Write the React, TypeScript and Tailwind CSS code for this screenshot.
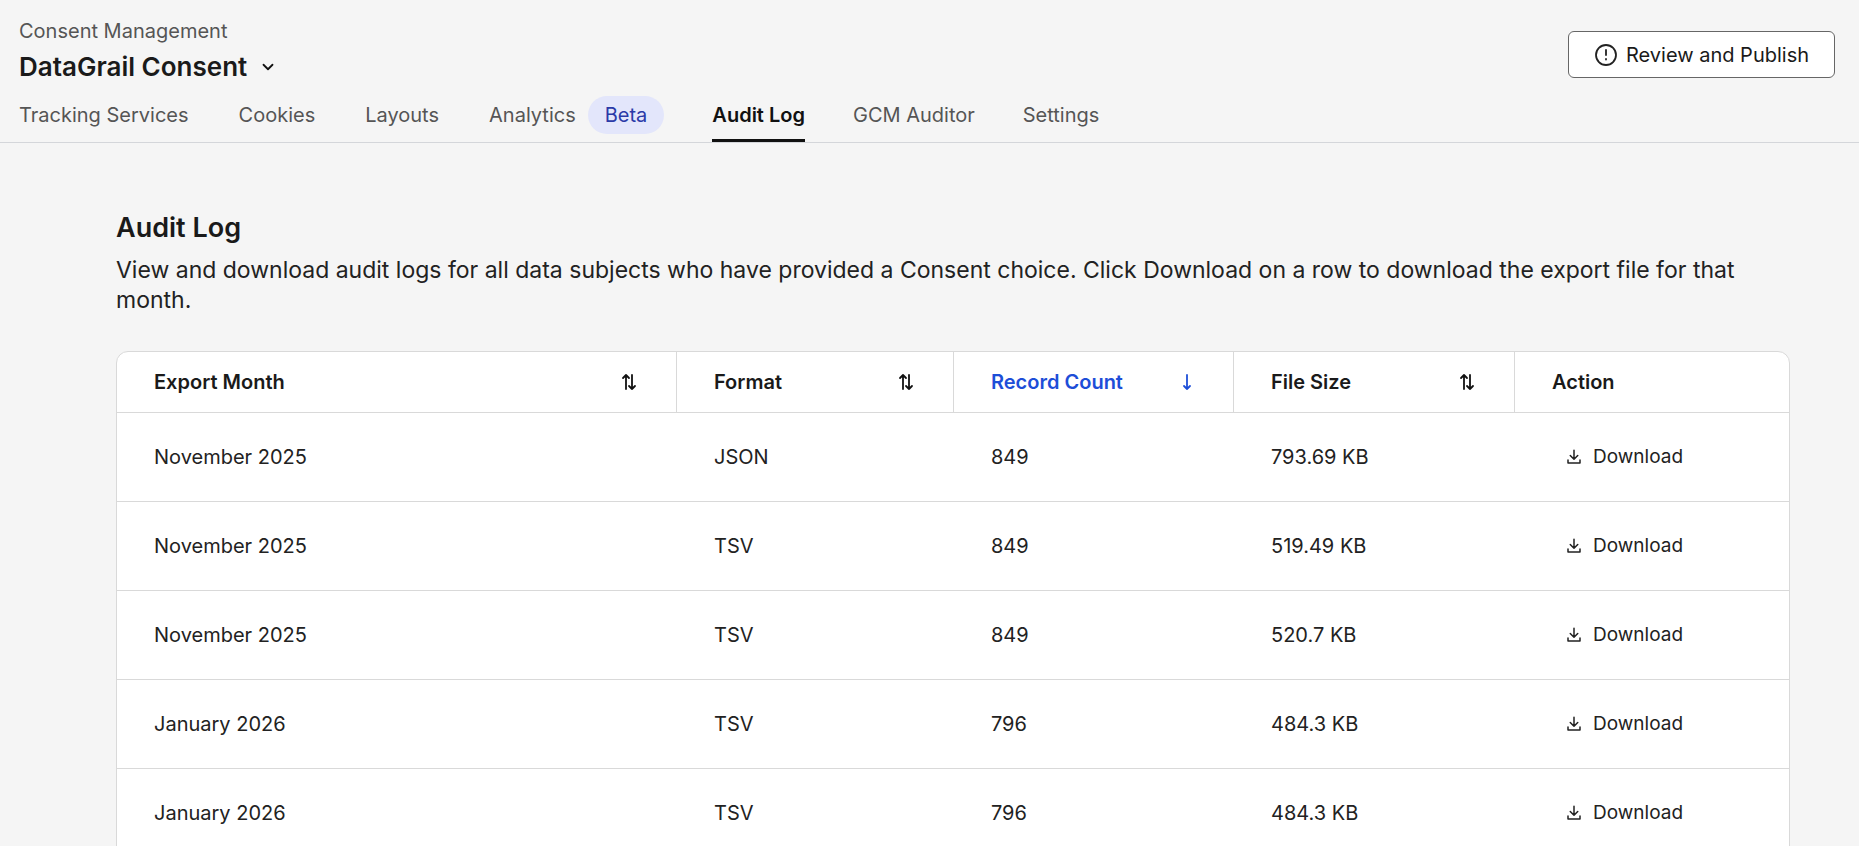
import React from "react";

const SortIcon = () => (
  <svg width="18" height="20" viewBox="0 0 18 20" fill="none" stroke="#111" strokeWidth="1.8" strokeLinecap="round" strokeLinejoin="round">
    <path d="M6 17V3M3 6l3-3 3 3" />
    <path d="M12 3v14M9 14l3 3 3-3" />
  </svg>
);

const DownIcon = () => (
  <svg width="12" height="20" viewBox="0 0 12 20" fill="none" stroke="#1d4ed8" strokeWidth="1.8" strokeLinecap="round" strokeLinejoin="round">
    <path d="M6 3v14M3 14l3 3 3-3" />
  </svg>
);

const DlIcon = () => (
  <svg width="18" height="18" viewBox="0 0 24 24" fill="none" stroke="#222" strokeWidth="2" strokeLinecap="round" strokeLinejoin="round">
    <path d="M12 3v12M7 10l5 5 5-5" />
    <path d="M4 16v4h16v-4" />
  </svg>
);

const rows = [
  ["November 2025", "JSON", "849", "793.69 KB"],
  ["November 2025", "TSV", "849", "519.49 KB"],
  ["November 2025", "TSV", "849", "520.7 KB"],
  ["January 2026", "TSV", "796", "484.3 KB"],
  ["January 2026", "TSV", "796", "484.3 KB"],
];

const cols = "grid grid-cols-[560px_277px_280px_281px_1fr]";

export default function App() {
  return (
    <div className="h-[846px] overflow-hidden bg-[#f5f5f5] text-[#1a1a1a]" style={{ fontFamily: "Inter, 'Noto Sans', sans-serif" }}>
      <div className="border-b border-[#d4d6da]">
        <div className="flex justify-between px-[19px] pt-[18px]">
          <div>
            <div className="text-[20px] leading-[26px] text-[#555]">Consent Management</div>
            <div className="mt-[6px] flex items-center gap-3 text-[26px] font-semibold leading-[34px]">
              DataGrail Consent
              <svg width="18" height="18" viewBox="0 0 24 24" fill="none" stroke="#111" strokeWidth="2.4" strokeLinecap="round" strokeLinejoin="round"><path d="M6 9l6 6 6-6" /></svg>
            </div>
          </div>
          <button className="mt-[13px] mr-[5px] flex h-[47px] w-[267px] items-center justify-center gap-2 rounded-[6px] border border-[#666] bg-white text-[20px]">
            <svg width="24" height="24" viewBox="0 0 24 24" fill="none" stroke="#222" strokeWidth="1.8" strokeLinecap="round"><circle cx="12" cy="12" r="10" /><path d="M12 7v5M12 16v.5" /></svg>
            Review and Publish
          </button>
        </div>
        <div className="mt-[12px] flex items-end px-[19px] text-[20px] text-[#555]">
          {["Tracking Services", "Cookies", "Layouts"].map((t) => (
            <div key={t} className="mr-[50px] pb-[12px]">{t}</div>
          ))}
          <div className="mr-[48px] flex items-center gap-[12px] pb-[6px]">
            <span className="pb-[2px]">Analytics</span>
            <span className="mb-[2px] rounded-full bg-[#e3e6fb] px-[17px] py-[4px] text-[#2b3aa8]">Beta</span>
          </div>
          <div className="mr-[48px] border-b-[3px] border-[#111] pb-[9px] font-semibold text-[#111]">Audit Log</div>
          <div className="mr-[48px] pb-[12px]">GCM Auditor</div>
          <div className="pb-[12px]">Settings</div>
        </div>
      </div>
      <div className="px-[116px] pt-[68px]">
        <h1 className="text-[27px] font-semibold leading-[34px]">Audit Log</h1>
        <p className="mt-[10px] w-[1660px] text-[23px] leading-[30px] text-[#222]">
          View and download audit logs for all data subjects who have provided a Consent choice. Click Download on a row to download the export file for that month.
        </p>
        <div className="mt-[36px] w-[1674px] overflow-hidden rounded-t-[12px] border border-[#d9d9d9] bg-white text-[20px]">
          <div className={`${cols} h-[61px] border-b border-[#d9d9d9] font-semibold`}>
            <div className="flex items-center justify-between border-r border-[#d9d9d9] pl-[37px] pr-[38px]">Export Month<SortIcon /></div>
            <div className="flex items-center justify-between border-r border-[#d9d9d9] pl-[37px] pr-[38px]">Format<SortIcon /></div>
            <div className="flex items-center justify-between border-r border-[#d9d9d9] pl-[37px] pr-[40px] text-[#1d4ed8]">Record Count<DownIcon /></div>
            <div className="flex items-center justify-between border-r border-[#d9d9d9] pl-[37px] pr-[38px]">File Size<SortIcon /></div>
            <div className="flex items-center pl-[37px]">Action</div>
          </div>
          {rows.map((r, i) => (
            <div key={i} className={`${cols} h-[89px] border-b border-[#d9d9d9] text-[#222]`}>
              <div className="flex items-center pl-[37px]">{r[0]}</div>
              <div className="flex items-center pl-[37px]">{r[1]}</div>
              <div className="flex items-center pl-[37px]">{r[2]}</div>
              <div className="flex items-center pl-[37px]">{r[3]}</div>
              <div className="flex items-center gap-[10px] pl-[50px] text-[19px]"><DlIcon />Download</div>
            </div>
          ))}
        </div>
      </div>
    </div>
  );
}
